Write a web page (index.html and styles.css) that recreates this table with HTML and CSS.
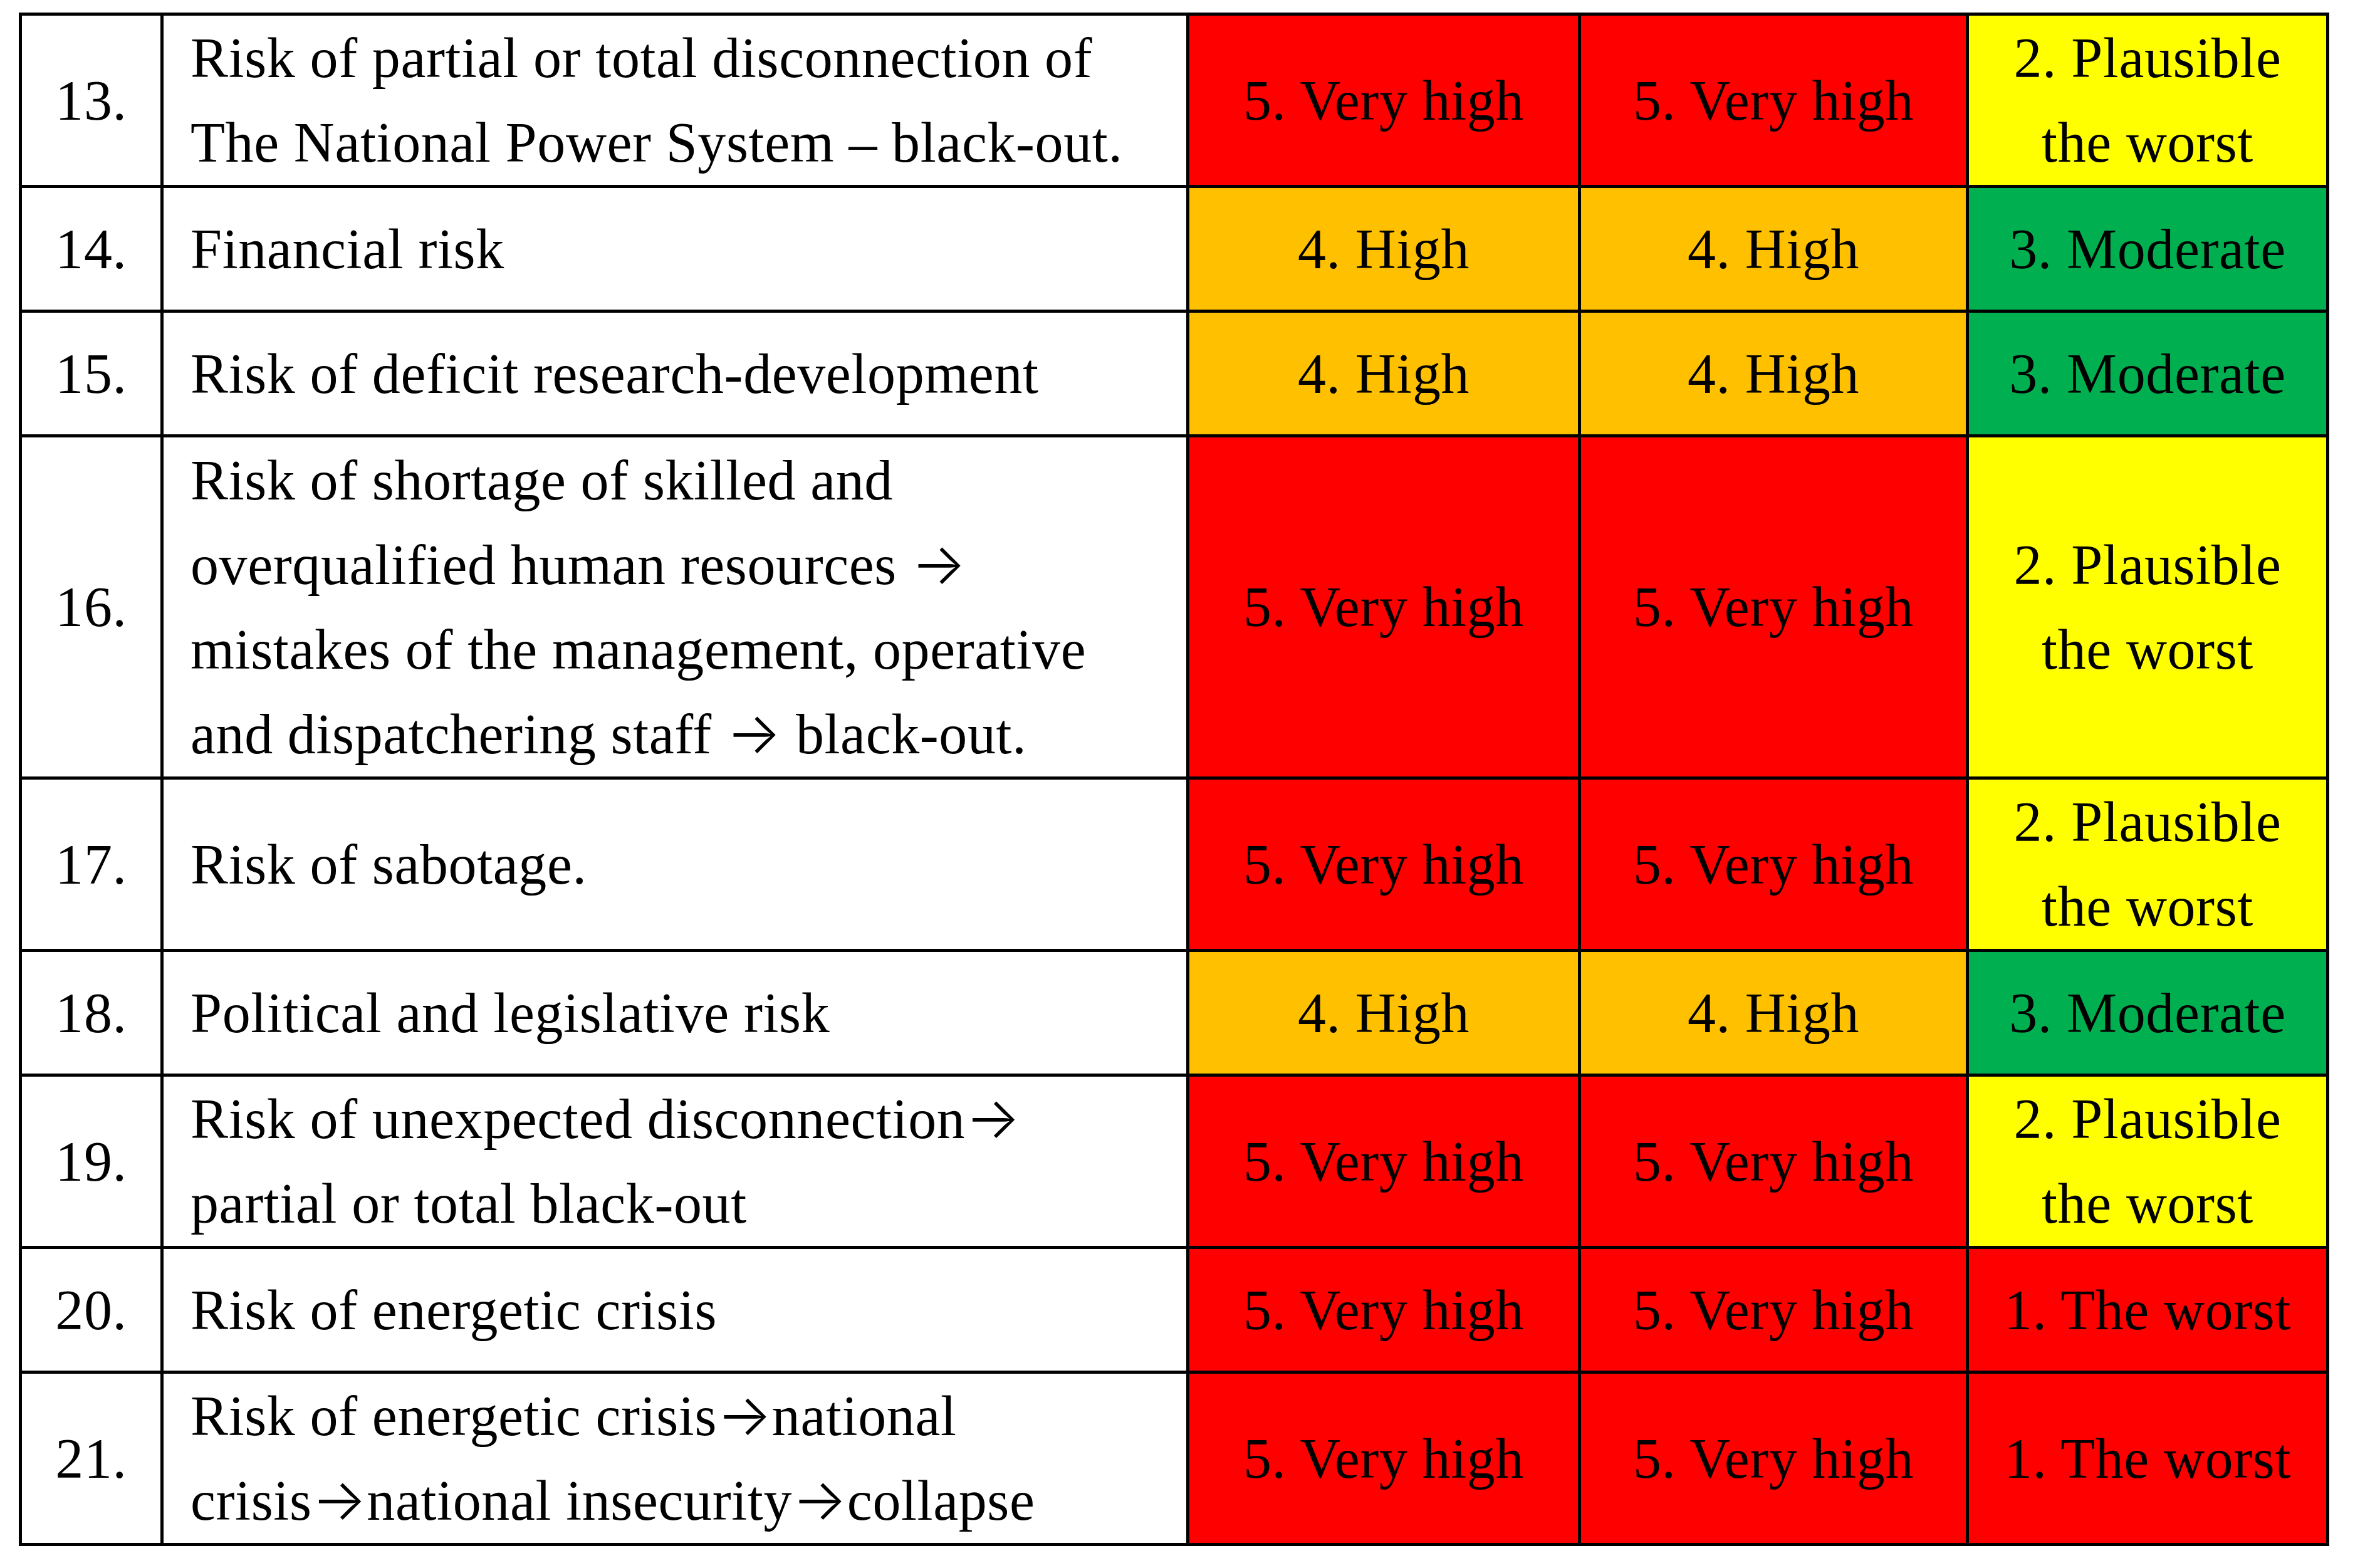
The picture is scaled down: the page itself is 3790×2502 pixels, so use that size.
FILE: index.html
```
<!DOCTYPE html>
<html lang="en">
<head>
<meta charset="utf-8">
<title>Risk table</title>
<link rel="stylesheet" href="styles.css">
</head>
<body>
<div class="table">
  <div class="cell num">13.</div>
  <div class="cell desc"><p class="t">Risk of partial or total disconnection of<br>The National Power System – black-out.</p></div>
  <div class="cell c red">5. Very high</div>
  <div class="cell c red">5. Very high</div>
  <div class="cell c yellow"><p class="t">2. Plausible<br>the worst</p></div>

  <div class="cell num">14.</div>
  <div class="cell desc"><p class="t">Financial risk</p></div>
  <div class="cell c orange">4. High</div>
  <div class="cell c orange">4. High</div>
  <div class="cell c green">3. Moderate</div>

  <div class="cell num">15.</div>
  <div class="cell desc"><p class="t">Risk of deficit research-development</p></div>
  <div class="cell c orange">4. High</div>
  <div class="cell c orange">4. High</div>
  <div class="cell c green">3. Moderate</div>

  <div class="cell num">16.</div>
  <div class="cell desc"><p class="t">Risk of shortage of skilled and<br>overqualified human resources <span class="arrow">→</span><br>mistakes of the management, operative<br>and dispatchering staff <span class="arrow">→</span> black-out.</p></div>
  <div class="cell c red">5. Very high</div>
  <div class="cell c red">5. Very high</div>
  <div class="cell c yellow"><p class="t">2. Plausible<br>the worst</p></div>

  <div class="cell num">17.</div>
  <div class="cell desc"><p class="t">Risk of sabotage.</p></div>
  <div class="cell c red">5. Very high</div>
  <div class="cell c red">5. Very high</div>
  <div class="cell c yellow"><p class="t">2. Plausible<br>the worst</p></div>

  <div class="cell num">18.</div>
  <div class="cell desc"><p class="t">Political and legislative risk</p></div>
  <div class="cell c orange">4. High</div>
  <div class="cell c orange">4. High</div>
  <div class="cell c green">3. Moderate</div>

  <div class="cell num">19.</div>
  <div class="cell desc"><p class="t">Risk of unexpected disconnection<span class="arrow">→</span><br>partial or total black-out</p></div>
  <div class="cell c red">5. Very high</div>
  <div class="cell c red">5. Very high</div>
  <div class="cell c yellow"><p class="t">2. Plausible<br>the worst</p></div>

  <div class="cell num">20.</div>
  <div class="cell desc"><p class="t">Risk of energetic crisis</p></div>
  <div class="cell c red">5. Very high</div>
  <div class="cell c red">5. Very high</div>
  <div class="cell c red">1. The worst</div>

  <div class="cell num">21.</div>
  <div class="cell desc"><p class="t">Risk of energetic crisis<span class="arrow">→</span>national<br>crisis<span class="arrow">→</span>national insecurity<span class="arrow">→</span>collapse</p></div>
  <div class="cell c red">5. Very high</div>
  <div class="cell c red">5. Very high</div>
  <div class="cell c red">1. The worst</div>
</div>
</body>
</html>
```

FILE: styles.css
```
html, body {
  margin: 0;
  padding: 0;
  background: #ffffff;
}

body {
  padding: 20px 0 0 30px;
  font-family: "Liberation Serif", "Times New Roman", serif;
  font-size: 90px;
  line-height: 135px;
  letter-spacing: 0.6px;
  color: #000000;
}

.table {
  display: grid;
  width: max-content;
  background: #000000;
  padding: 5px;
  gap: 5px;
  grid-template-columns: 221px 1632px 620px 614px 570px;
  grid-template-rows: 270px 194px 194px 541px 270px 194px 270px 194px 270px;
}

.cell {
  display: flex;
  align-items: center;
  background: #ffffff;
  white-space: nowrap;
}

.t {
  margin: 0;
}

.num {
  justify-content: center;
  text-align: center;
}

.desc {
  padding-left: 43px;
}

.c {
  justify-content: center;
  text-align: center;
}

.arrow {
  font-family: "Inter", "DejaVu Sans", sans-serif;
  font-weight: 300;
  font-size: 92px;
  line-height: 1;
  letter-spacing: 0;
}

.red {
  background: #ff0000;
}

.orange {
  background: #ffc000;
}

.yellow {
  background: #ffff00;
}

.green {
  background: #00b050;
}
```
